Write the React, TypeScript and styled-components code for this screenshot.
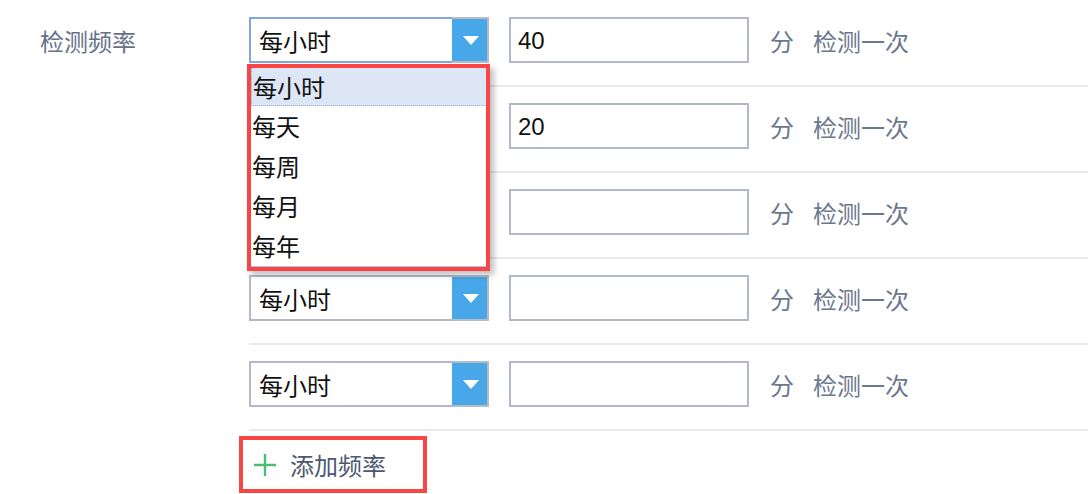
import styled, { createGlobalStyle } from "styled-components";

const GlobalStyle = createGlobalStyle`
  html, body {
    margin: 0;
    padding: 0;
    background: #ffffff;
  }
  body {
    font-family: "Noto Sans CJK SC", "Liberation Sans", sans-serif;
    overflow: hidden;
  }
`;

type Rule = { id: number; value: string; open?: boolean; focused?: boolean };

const rules: Rule[] = [
  { id: 1, value: "40", open: true, focused: true },
  { id: 2, value: "20" },
  { id: 3, value: "" },
  { id: 4, value: "" },
  { id: 5, value: "" },
];

const options = ["每小时", "每天", "每周", "每月", "每年"];

const App = () => {
  return (
    <Page>
      <GlobalStyle />
      <LabelCol>
        <Label>检测频率</Label>
      </LabelCol>
      <FormCol>
        {rules.map((r) => (
          <Row key={r.id}>
            <SelectWrap $open={r.open}>
              <SelectBox>
                <SelectText $focused={r.focused}>每小时</SelectText>
                <ArrowBtn>
                  <Triangle />
                </ArrowBtn>
              </SelectBox>
              {r.open ? (
                <DropList>
                  <DropInner>
                    {options.map((o, i) => (
                      <DropItem key={o} $active={i === 0}>
                        {o}
                      </DropItem>
                    ))}
                  </DropInner>
                </DropList>
              ) : null}
            </SelectWrap>
            <NumInput>{r.value}</NumInput>
            <Unit>分</Unit>
            <Unit>检测一次</Unit>
          </Row>
        ))}
        <AddButton>
          <svg width="24" height="24" viewBox="0 0 24 24">
            <path d="M12 1 V23 M1 12 H23" stroke="#4dbd74" strokeWidth="2.4" fill="none" />
          </svg>
          <AddText>添加频率</AddText>
        </AddButton>
      </FormCol>
    </Page>
  );
};

const Page = styled.div`
  display: flex;
  width: 1088px;
  height: 494px;
  padding-top: 1px;
  box-sizing: border-box;
`;

const LabelCol = styled.div`
  width: 249px;
  padding-left: 40px;
  box-sizing: border-box;
`;

const Label = styled.div`
  font-size: 24px;
  line-height: 46px;
  margin-top: 17px;
  color: #66728a;
`;

const FormCol = styled.div`
  flex: 1;
  display: flex;
  flex-direction: column;
`;

const Row = styled.div`
  display: flex;
  align-items: center;
  padding: 16px 0 22px;
  border-bottom: 2px solid #e8e8ee;
`;

const SelectWrap = styled.div<{ $open?: boolean }>`
  position: relative;
  z-index: ${(p) => (p.$open ? 5 : 1)};
`;

const SelectBox = styled.div`
  display: flex;
  width: 240px;
  height: 46px;
`;

const SelectText = styled.div<{ $focused?: boolean }>`
  flex: 1;
  border: 2px solid ${(p) => (p.$focused ? "#80a8da" : "#b4b8cc")};
  border-right: none;
  padding: 1px 0 0 8px;
  font-size: 24px;
  line-height: 41px;
  color: #111;
  background: #fff;
`;

const ArrowBtn = styled.div`
  width: 35px;
  background: #47a7e8;
  border: 2px solid #b9bbc4;
  border-left: none;
  display: flex;
  align-items: center;
  justify-content: center;
`;

const Triangle = styled.div`
  width: 0;
  height: 0;
  border-left: 8px solid transparent;
  border-right: 8px solid transparent;
  border-top: 9px solid #fff;
  margin-left: 2px;
`;

const DropList = styled.div`
  position: absolute;
  top: 47px;
  left: -2px;
  width: 243px;
  box-sizing: border-box;
  border: 4px solid #fa4545;
  background: #fff;
  box-shadow: 4px 4px 6px rgba(0, 0, 0, 0.25);
`;

const DropInner = styled.div`
  border-bottom: 1px solid #b4c4dc;
`;

const DropItem = styled.div<{ $active?: boolean }>`
  height: ${(p) => (p.$active ? "37px" : "40px")};
  line-height: ${(p) => (p.$active ? "37px" : "40px")};
  padding-left: 1px;
  font-size: 24px;
  color: #111;
  background: ${(p) => (p.$active ? "#dce6f5" : "#fff")};
  border: ${(p) => (p.$active ? "1px dotted #8fb0e6" : "none")};
  border-right: none;
  border-top: none;
`;

const NumInput = styled.div`
  width: 240px;
  height: 46px;
  box-sizing: border-box;
  margin-left: 20px;
  border: 2px solid #b4b8cc;
  padding: 1px 0 0 7px;
  font-family: "Liberation Sans", Arial, sans-serif;
  font-size: 24px;
  line-height: 41px;
  color: #111;
`;

const Unit = styled.div`
  margin-left: 21px;
  font-size: 24px;
  color: #6b778d;
  &:last-child {
    margin-left: 19px;
  }
`;

const AddButton = styled.div`
  display: flex;
  align-items: center;
  gap: 13px;
  width: 188px;
  height: 57px;
  box-sizing: border-box;
  margin: 5px 0 0 -10px;
  padding-left: 10px;
  border: 4px solid #fa4545;
`;

const AddText = styled.div`
  font-size: 24px;
  color: #4c5872;
`;

export default App;
